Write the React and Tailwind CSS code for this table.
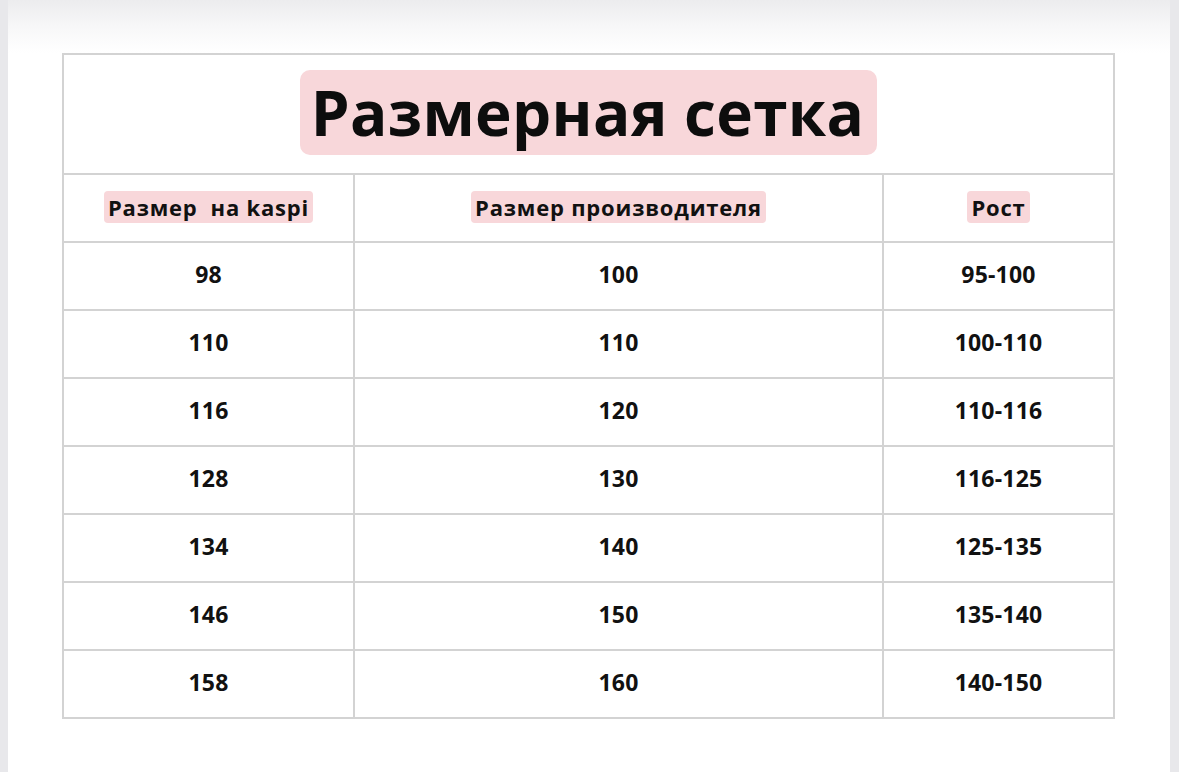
const rows = [
  ["98", "100", "95-100"],
  ["110", "110", "100-110"],
  ["116", "120", "110-116"],
  ["128", "130", "116-125"],
  ["134", "140", "125-135"],
  ["146", "150", "135-140"],
  ["158", "160", "140-150"],
];

function Row({ cells, header }) {
  return (
    <div className="flex h-[68px] border-t-2 border-[#d3d3d3]">
      {cells.map((c, i) => (
        <div
          key={i}
          className={
            (i === 0
              ? "w-[289px]"
              : i === 1
              ? "w-[529px] border-l-2 border-[#d3d3d3]"
              : "flex-1 border-l-2 border-[#d3d3d3]") +
            " flex items-center justify-center"
          }
        >
          {header ? (
            <span className="text-[22px] tracking-[0.8px] font-bold leading-[32px] px-1 rounded-[4px] bg-[#f8d7da] text-[#111] whitespace-pre -mt-[3px]">
              {c}
            </span>
          ) : (
            <span className="text-[23px] tracking-[0.2px] font-bold text-[#111] -mt-[4px]">{c}</span>
          )}
        </div>
      ))}
    </div>
  );
}

export default function App() {
  return (
    <div
      className="w-[1179px] h-[772px] flex bg-[#e8e8eb] overflow-hidden"
      style={{ fontFamily: '"Open Sans", "Noto Sans", sans-serif' }}
    >
      <div className="ml-[8px] w-[1162px] h-full bg-white flex flex-col">
        <div className="h-[53px] bg-gradient-to-b from-[#ececee] via-[#f7f7f8] to-white" />
        <div className="ml-[54px] w-[1053px] border-2 border-[#d3d3d3]">
          <div className="h-[118px] flex items-center justify-center">
            <h1 className="text-[62px] tracking-[0.3px] font-bold leading-[85px] pl-[11px] pr-[13px] rounded-[10px] bg-[#f8d7da] text-[#0d0d0d] -mt-[3px]">
              Размерная сетка
            </h1>
          </div>
          <Row header cells={["Размер  на kaspi", "Размер производителя", "Рост"]} />
          {rows.map((r, i) => (
            <Row key={i} cells={r} />
          ))}
        </div>
      </div>
    </div>
  );
}
